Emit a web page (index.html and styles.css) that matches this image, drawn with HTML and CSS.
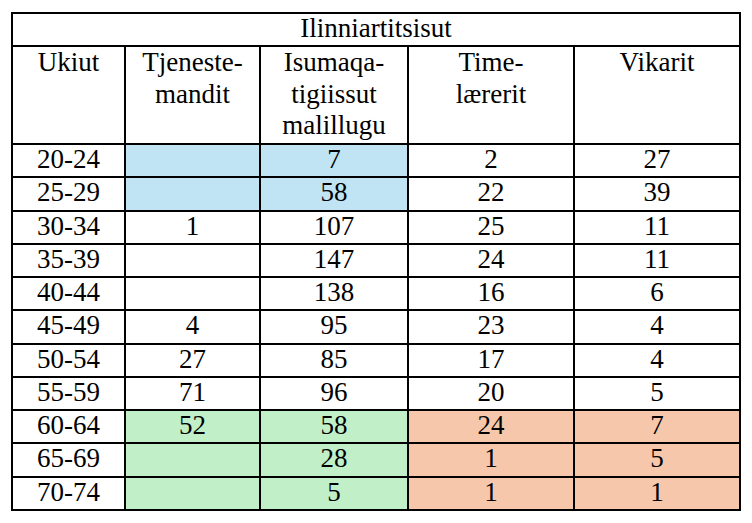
FILE: index.html
```html
<!DOCTYPE html>
<html lang="kl">
<head>
<meta charset="utf-8">
<title>Ilinniartitsisut</title>
<link rel="stylesheet" href="styles.css">
</head>
<body>
<table class="grid">
  <colgroup>
    <col class="c1"><col class="c2"><col class="c3"><col class="c4"><col class="c5">
  </colgroup>
  <thead>
    <tr><th colspan="5" class="title"><div class="title-in">Ilinniartitsisut</div></th></tr>
    <tr class="head">
      <th><div class="hd">Ukiut</div></th>
      <th><div class="hd">Tjeneste-<br>mandit</div></th>
      <th><div class="hd">Isumaqa-<br>tigiissut<br>malillugu</div></th>
      <th><div class="hd">Time-<br>lærerit</div></th>
      <th><div class="hd">Vikarit</div></th>
    </tr>
  </thead>
  <tbody>
    <tr><td>20-24</td><td class="blue"></td><td class="blue">7</td><td>2</td><td>27</td></tr>
    <tr><td>25-29</td><td class="blue"></td><td class="blue">58</td><td>22</td><td>39</td></tr>
    <tr><td>30-34</td><td>1</td><td>107</td><td>25</td><td>11</td></tr>
    <tr><td>35-39</td><td></td><td>147</td><td>24</td><td>11</td></tr>
    <tr><td>40-44</td><td></td><td>138</td><td>16</td><td>6</td></tr>
    <tr><td>45-49</td><td>4</td><td>95</td><td>23</td><td>4</td></tr>
    <tr><td>50-54</td><td>27</td><td>85</td><td>17</td><td>4</td></tr>
    <tr><td>55-59</td><td>71</td><td>96</td><td>20</td><td>5</td></tr>
    <tr><td>60-64</td><td class="green">52</td><td class="green">58</td><td class="salmon">24</td><td class="salmon">7</td></tr>
    <tr><td>65-69</td><td class="green"></td><td class="green">28</td><td class="salmon">1</td><td class="salmon">5</td></tr>
    <tr><td>70-74</td><td class="green"></td><td class="green">5</td><td class="salmon">1</td><td class="salmon">1</td></tr>
  </tbody>
</table>
</body>
</html>
```

FILE: styles.css
```css
html, body {
  margin: 0;
  padding: 0;
  background: #ffffff;
}

body {
  padding: 12px 0 0 11px;
  font-family: "Liberation Serif", Tinos, "Noto Serif", "DejaVu Serif", FreeSerif, "Times New Roman", Times, serif;
  font-size: 27px;
  color: #000000;
}

.grid {
  table-layout: fixed;
  width: 730px;
  border-collapse: separate;
  border-spacing: 0;
  border-top: 2px solid #000;
  border-left: 2px solid #000;
  font: inherit;
}

.c1 { width: 113px; }
.c2 { width: 135px; }
.c3 { width: 148px; }
.c4 { width: 166px; }
.c5 { width: 166px; }

.grid th,
.grid td {
  border-right: 2px solid #000;
  border-bottom: 2px solid #000;
  padding: 0;
  text-align: center;
  font-weight: normal;
  vertical-align: top;
}

.title-in {
  height: 31px;
  line-height: 29px;
}

.hd {
  height: 96px;
  line-height: 31.5px;
}

.grid td {
  line-height: 29px;
  padding-bottom: 2.27px;
}

.blue { background: #c1e4f5; }
.green { background: #c1f0c8; }
.salmon { background: #f7c7ac; }
```
